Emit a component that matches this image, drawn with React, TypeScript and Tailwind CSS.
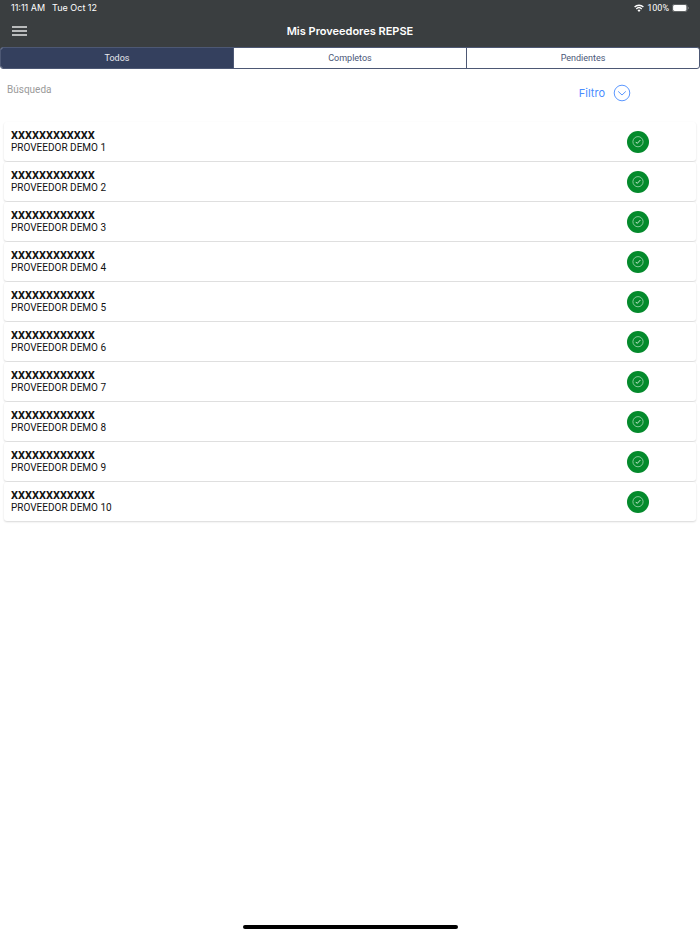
import React, { useState } from "react";

interface Provider {
    id: number;
    rfc: string;
    name: string;
    complete: boolean;
}

const providers: Provider[] = Array.from({ length: 10 }, (_, i) => ({
    id: i + 1,
    rfc: "XXXXXXXXXXXX",
    name: `PROVEEDOR DEMO ${i + 1}`,
    complete: true,
}));

const tabs = ["Todos", "Completos", "Pendientes"];

const StatusBar: React.FC = () => (
    <div className="flex items-center justify-between px-[11px] h-4 text-[9px] leading-4">
        <div className="flex gap-[7px] font-['Inter',sans-serif]">
            <span>11:11 AM</span>
            <span>Tue Oct 12</span>
        </div>
        <div className="flex items-center gap-[3px]">
            <svg width="10" height="8" viewBox="0 0 10 8" fill="none" stroke="currentColor" strokeWidth="1.4">
                <path d="M0.6 3a6.3 6.3 0 0 1 8.8 0" />
                <path d="M2.3 4.9a3.9 3.9 0 0 1 5.4 0" />
                <path d="M5 7.9 3.5 6.3a2.1 2.1 0 0 1 3 0z" fill="currentColor" stroke="none" />
            </svg>
            <span>100%</span>
            <svg width="17" height="8" viewBox="0 0 17 8">
                <rect x="0.3" y="0.3" width="14.9" height="7.4" rx="2.2" fill="none" stroke="#8c8f90" strokeWidth="0.6" />
                <rect x="1.1" y="1.1" width="13.3" height="5.8" rx="1.4" fill="#fff" />
                <path d="M16 2.8c1 .4 1 2 0 2.4z" fill="#8c8f90" />
            </svg>
        </div>
    </div>
);

const ProviderRow: React.FC<{ provider: Provider }> = ({ provider }) => (
    <li className="flex items-center justify-between h-[39px] pl-[7px] pr-[47px] rounded-[3px] bg-white shadow-[0_1px_2px_rgba(0,0,0,0.16)]">
        <div className="text-[10px] leading-3 text-[#111]">
            <p className="text-[11px] leading-3 font-bold">{provider.rfc}</p>
            <p>{provider.name}</p>
        </div>
        {provider.complete && (
            <svg width="22" height="22" viewBox="0 0 22 22" fill="none" role="img" aria-label="Completo">
                <circle cx="11" cy="11" r="11" fill="#048a2c" />
                <circle cx="11" cy="10.7" r="5.1" stroke="#b9dfc4" strokeWidth="0.7" />
                <path d="M8.7 10.9l1.5 1.5 3.2-3.4" stroke="#e2f3e6" strokeWidth="0.9" />
            </svg>
        )}
    </li>
);

const App: React.FC = () => {
    const [active, setActive] = useState("Todos");
    const [search, setSearch] = useState("");

    const visible = providers.filter(
        (p) =>
            (active === "Todos" || p.complete === (active === "Completos")) &&
            p.name.toLowerCase().includes(search.toLowerCase())
    );

    return (
        <div className="min-h-screen flex flex-col bg-white font-['Roboto','Liberation_Sans',sans-serif]">
            {/* Header */}
            <header className="bg-[#3a3e40] text-white pb-px">
                <StatusBar />
                <div className="grid grid-cols-[1fr_auto_1fr] items-center h-[30px] px-3">
                    <button aria-label="Menú" className="w-4">
                        <svg width="15" height="10" viewBox="0 0 15 10" stroke="#e4e5e5" strokeWidth="1.3">
                            <path d="M0 1h15M0 5h15M0 9h15" />
                        </svg>
                    </button>
                    <h1 className="text-[11px] leading-4 font-semibold font-['Inter',sans-serif]">Mis Proveedores REPSE</h1>
                </div>
            </header>

            {/* Tabs */}
            <div className="bg-[linear-gradient(#3a3e40_50%,#fff_50%)]">
                <div className="flex h-[22px] rounded-[3px] border border-[#4d5874] bg-white overflow-hidden divide-x divide-[#4d5874]">
                    {tabs.map((tab) => (
                        <button
                            key={tab}
                            onClick={() => setActive(tab)}
                            className={`flex-1 pb-px text-[9px] leading-4 ${
                                active === tab ? "bg-[#34405e] text-[#e6e8ee]" : "text-[#4a5677]"
                            }`}
                        >
                            {tab}
                        </button>
                    ))}
                </div>
            </div>

            {/* Search and filter */}
            <div className="flex items-start justify-between pt-[13px] pl-[7px] pr-[69px] h-[53px]">
                <input
                    type="text"
                    aria-label="Búsqueda"
                    placeholder="Búsqueda"
                    value={search}
                    onChange={(e) => setSearch(e.target.value)}
                    className="flex-1 text-[10px] leading-4 outline-none placeholder:text-[#9a9a9a]"
                />
                <button className="flex items-center gap-2 mt-[2px] text-[11px] leading-4 text-[#4a8cff] font-['Inter',sans-serif]">
                    Filtro
                    <svg width="18" height="18" viewBox="0 0 18 18" fill="none" stroke="currentColor" strokeWidth="0.9">
                        <circle cx="9" cy="9" r="7.8" />
                        <path d="M5.2 7.4 9 11l3.8-3.6" />
                    </svg>
                </button>
            </div>

            {/* Providers */}
            <ul className="flex flex-col gap-px px-1">
                {visible.map((p) => (
                    <ProviderRow key={p.id} provider={p} />
                ))}
            </ul>

            <div className="mt-auto mb-[5px] mx-auto w-[215px] h-1 rounded-full bg-black" />
        </div>
    );
};

export default App;
